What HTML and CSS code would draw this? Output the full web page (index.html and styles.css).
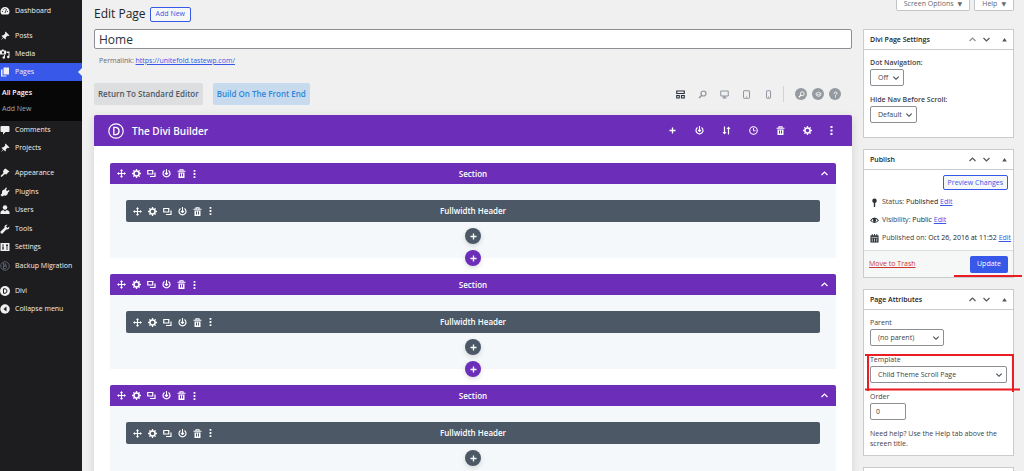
FILE: index.html
```html
<!DOCTYPE html>
<html lang="en">
<head>
<meta charset="utf-8">
<title>Edit Page</title>
<link rel="stylesheet" href="styles.css">
</head>
<body>
<svg class="sprite" aria-hidden="true">
  <symbol id="move" viewBox="0 0 18 18"><path d="M9 2v14M2 9h14" stroke="currentColor" stroke-width="2.4"/><path d="M9 0l3 4H6zM9 18l3-4H6zM0 9l4-3v6zM18 9l-4-3v6z" fill="currentColor"/></symbol>
  <symbol id="gear" viewBox="0 0 18 18"><circle cx="9" cy="9" r="5" fill="none" stroke="currentColor" stroke-width="3"/><path d="M9 0v4M9 14v4M0 9h4M14 9h4M2.8 2.8l2.6 2.6M12.6 12.6l2.6 2.6M15.2 2.8l-2.6 2.6M5.4 12.6l-2.6 2.6" stroke="currentColor" stroke-width="2.6"/></symbol>
  <symbol id="copy" viewBox="0 0 18 18"><path d="M1.500 3h10v7h-10zM6 15h10V7" fill="none" stroke="currentColor" stroke-width="2.4"/></symbol>
  <symbol id="power" viewBox="0 0 18 18"><path d="M5 3a7 7 0 1 0 8 0" fill="none" stroke="currentColor" stroke-width="2.3"/><path d="M9 0v10M6 8l3 3 3-3" fill="none" stroke="currentColor" stroke-width="2.2"/></symbol>
  <symbol id="trash" viewBox="0 0 18 18"><path d="M1 4.5h16M6 4V1.5h6V4" fill="none" stroke="currentColor" stroke-width="2.3"/><path d="M3 7h12v11H3zM6 9v6h2V9zM10 9v6h2V9z" fill="currentColor" fill-rule="evenodd"/></symbol>
  <symbol id="dots" viewBox="0 0 6 18"><path d="M1 0h4v4H1zM1 7h4v4H1zM1 14h4v4H1z" fill="currentColor"/></symbol>
  <symbol id="plus" viewBox="0 0 18 18"><path d="M9 3v12M3 9h12" stroke="currentColor" stroke-width="2.600"/></symbol>
  <symbol id="sort" viewBox="0 0 18 18"><path d="M5 1v14M13 17V3" stroke="currentColor" stroke-width="2.400"/><path d="M1 12h8l-4 5zM9 6h8l-4-5z" fill="currentColor"/></symbol>
  <symbol id="clock" viewBox="0 0 18 18"><circle cx="9" cy="9" r="7.500" fill="none" stroke="currentColor" stroke-width="2.200"/><path d="M9 4v5.500h4" fill="none" stroke="currentColor" stroke-width="2"/></symbol>
  <symbol id="up" viewBox="0 0 18 18"><path d="M3 12l6-6 6 6" fill="none" stroke="currentColor" stroke-width="2.400"/></symbol>
  <symbol id="down" viewBox="0 0 18 18"><path d="M3 6l6 6 6-6" fill="none" stroke="currentColor" stroke-width="2.400"/></symbol>
  <symbol id="search" viewBox="0 0 18 18"><circle cx="11" cy="7" r="5" fill="none" stroke="currentColor" stroke-width="2.400"/><path d="M7.500 10.500L2 16" stroke="currentColor" stroke-width="3"/></symbol>
  <symbol id="wire" viewBox="0 0 18 18"><path d="M1.500 2h15v5h-15zM1.500 11h5v5h-5zM11 11h5.500v5H11z" fill="none" stroke="currentColor" stroke-width="2.300"/></symbol>
  <symbol id="desktop" viewBox="0 0 18 18"><path d="M1.500 2h15v10h-15z" fill="none" stroke="currentColor" stroke-width="2"/><path d="M7 12h4v3h2v2H5v-2h2z" fill="currentColor"/></symbol>
  <symbol id="tablet" viewBox="0 0 18 18"><rect x="3" y="1.500" width="12" height="15" rx="1" fill="none" stroke="currentColor" stroke-width="2"/><path d="M8 14h2" stroke="currentColor" stroke-width="2"/></symbol>
  <symbol id="phone" viewBox="0 0 18 18"><rect x="5" y="1.500" width="8" height="15" rx="1" fill="none" stroke="currentColor" stroke-width="2"/><path d="M8 14h2" stroke="currentColor" stroke-width="2"/></symbol>
  <symbol id="layers" viewBox="0 0 18 18"><path d="M9 3l7 3.500L9 10 2 6.500zM2 10l7 4 7-4" fill="none" stroke="currentColor" stroke-width="2"/></symbol>
  <symbol id="help" viewBox="0 0 18 18"><path d="M5.500 7c0-6 7.500-5 7.500-1 0 2.500-4 2.500-4 6" fill="none" stroke="currentColor" stroke-width="2.400"/><path d="M7.700 13.800h2.600v2.600H7.700z" fill="currentColor"/></symbol>
  <symbol id="dash" viewBox="0 0 20 20"><path d="M3.500 17a9 9 0 1 1 13 0z" fill="currentColor"/><path d="M10 14l3-8M4 11h2M5.500 6l1.500 1.500M10 4v2M14 11h2" stroke="#1d1d1f" stroke-width="1.700"/></symbol>
  <symbol id="pin" viewBox="0 0 20 20"><path d="M11 1l8 8-2 1-2-.5-3.500 3.500c.5 2 0 3-1 4L7 13.500 1 19l5-6.500L3 9.500c1-1 2.500-1.500 4-1L10.500 5 10 3z" fill="currentColor"/></symbol>
  <symbol id="media" viewBox="0 0 20 20"><path d="M0 3h3l1-2h3l1 2h4v8H0z" fill="currentColor"/><circle cx="6" cy="7" r="2.300" fill="#1d1d1f"/><path d="M13 5h6v11a2.500 2.500 0 1 1-2-2.500V8h-4z" fill="currentColor"/><path d="M9 12v5" stroke="currentColor" stroke-width="2"/><circle cx="7.500" cy="17" r="2.500" fill="currentColor"/></symbol>
  <symbol id="pages" viewBox="0 0 20 20"><path d="M7 1h11v14H7z" fill="currentColor"/><path d="M5 5H2v14h11v-2H5z" fill="currentColor"/></symbol>
  <symbol id="comment" viewBox="0 0 20 20"><path d="M3 2h14q2 0 2 2v8q0 2-2 2h-6l-5 5v-5H3q-2 0-2-2V4q0-2 2-2z" fill="currentColor"/></symbol>
  <symbol id="brush" viewBox="0 0 20 20"><path d="M8 3l3-2 8 6-3 2-3 4-3-1-7 6-2-2 6-6-1-3z" fill="currentColor"/></symbol>
  <symbol id="plug" viewBox="0 0 20 20"><path d="M12 1l2 1-2 4 2 2 4-2 1 2-3 3c0 5-4 7-8 6l-4 2-3-3 3-3c-1-5 2-8 5-8z" fill="currentColor"/></symbol>
  <symbol id="user" viewBox="0 0 20 20"><circle cx="10" cy="5" r="4.500" fill="currentColor"/><path d="M1 18v-4q2-4 6-4l3 3 3-3q4 0 6 4v4z" fill="currentColor"/></symbol>
  <symbol id="wrench" viewBox="0 0 20 20"><path d="M18.500 5L15 8l-3-3 3-3.500c-4-1-7 2-6 6L1 15c-1 3 2 5 4 4l7.500-8c4 1 7-2 6-6z" fill="currentColor"/></symbol>
  <symbol id="sliders" viewBox="0 0 20 20"><path d="M1 2h18v16H1z" fill="currentColor"/><path d="M6 4v12M14 4v12M4 12h4M12 7h4" stroke="#1d1d1f" stroke-width="1.700"/></symbol>
  <symbol id="backup" viewBox="0 0 20 20"><circle cx="10" cy="10" r="8.500" fill="none" stroke="#56606c" stroke-width="2"/><path d="M7 4v12M7 6h4q3 2 0 4H7q7-1 6 3-1 3-6 3" fill="none" stroke="#56606c" stroke-width="2"/></symbol>
  <symbol id="divi" viewBox="0 0 20 20"><circle cx="10" cy="10" r="10" fill="currentColor"/><path d="M7 5.500h3q4 .5 4 4.500t-4 4.500H7z" fill="none" stroke="#1d1d1f" stroke-width="2"/></symbol>
  <symbol id="collapse" viewBox="0 0 20 20"><circle cx="10" cy="10" r="9.500" fill="currentColor"/><path d="M13 5v10l-6-5z" fill="#1d1d1f"/></symbol>
  <symbol id="ring" viewBox="0 0 20 20"><circle cx="10" cy="10" r="9" fill="none" stroke="currentColor" stroke-width="1.500"/><path d="M7.300 5.500H10q3.800.5 3.800 4.500T10 14.500H7.300z" fill="none" stroke="currentColor" stroke-width="1.700"/></symbol>
  <symbol id="post-pin" viewBox="0 0 20 20"><circle cx="10" cy="6" r="5" fill="currentColor"/><path d="M10 8v12" stroke="currentColor" stroke-width="3"/></symbol>
  <symbol id="eye" viewBox="0 0 20 20"><path d="M0 10q10-13 20 0-10 11-20 0z" fill="currentColor"/><path d="M3 10q2-3 4-3.500-1 4 1 6.500-3-.5-5-3zM17 10q-2-3-4-3.500 1 4-1 6.500 3-.5 5-3z" fill="#fff"/></symbol>
  <symbol id="calendar" viewBox="0 0 20 20"><path d="M1 3h18v16H1z" fill="currentColor"/><path d="M3 7.500h14M5 10v7M10 10v7M15 10v7" stroke="#fff" stroke-width="1.500"/><path d="M5 0v5M10 0v5M15 0v5" stroke="currentColor" stroke-width="2"/></symbol>
  <symbol id="tri" viewBox="0 0 18 18"><path d="M3 14L9 5l6 9z" fill="currentColor"/></symbol>
</svg>

<div class="app">
  <nav class="sidebar">
    <ul class="menu">
      <li><a href="#"><svg><use href="#dash"/></svg>Dashboard</a></li>
    </ul>
    <ul class="menu">
      <li><a href="#"><svg><use href="#pin"/></svg>Posts</a></li>
      <li><a href="#"><svg><use href="#media"/></svg>Media</a></li>
      <li class="current"><a href="#"><svg><use href="#pages"/></svg>Pages</a></li>
    </ul>
    <ul class="submenu">
      <li><a class="active" href="#">All Pages</a></li>
      <li><a href="#">Add New</a></li>
    </ul>
    <ul class="menu">
      <li><a href="#"><svg><use href="#comment"/></svg>Comments</a></li>
      <li><a href="#"><svg><use href="#pin"/></svg>Projects</a></li>
    </ul>
    <ul class="menu tools">
      <li><a href="#"><svg><use href="#brush"/></svg>Appearance</a></li>
      <li><a href="#"><svg><use href="#plug"/></svg>Plugins</a></li>
      <li><a href="#"><svg><use href="#user"/></svg>Users</a></li>
      <li><a href="#"><svg><use href="#wrench"/></svg>Tools</a></li>
      <li><a href="#"><svg><use href="#sliders"/></svg>Settings</a></li>
      <li><a href="#"><svg><use href="#backup"/></svg>Backup Migration</a></li>
    </ul>
    <ul class="menu">
      <li><a href="#"><svg><use href="#divi"/></svg>Divi</a></li>
      <li><a href="#"><svg><use href="#collapse"/></svg>Collapse menu</a></li>
    </ul>
  </nav>

  <main class="editor">
    <header class="title-row"><h1>Edit Page</h1><a class="outline-btn" href="#">Add New</a></header>
    <input class="title-input" type="text" value="Home" aria-label="Page title">
    <p class="permalink"><b>Permalink:</b> <a href="#">https://unitefold.tastewp.com/</a></p>
    <div class="toolbar">
      <button class="mode">Return To Standard Editor</button>
      <button class="mode front">Build On The Front End</button>
      <div class="views">
        <button class="on" aria-label="Wireframe"><svg><use href="#wire"/></svg></button>
        <button aria-label="Zoom"><svg><use href="#search"/></svg></button>
        <button aria-label="Desktop"><svg><use href="#desktop"/></svg></button>
        <button aria-label="Tablet"><svg><use href="#tablet"/></svg></button>
        <button aria-label="Phone"><svg><use href="#phone"/></svg></button>
      </div>
      <div class="rounds">
        <button aria-label="Search"><svg><use href="#search"/></svg></button>
        <button aria-label="Layers"><svg><use href="#layers"/></svg></button>
        <button aria-label="Help"><svg><use href="#help"/></svg></button>
      </div>
    </div>

    <div class="builder">
      <header class="builder-head">
        <svg class="logo"><use href="#ring"/></svg>
        <h2>The Divi Builder</h2>
        <div class="builder-tools">
          <button aria-label="Add"><svg><use href="#plus"/></svg></button>
          <button aria-label="Save"><svg><use href="#power"/></svg></button>
          <button aria-label="Sort"><svg><use href="#sort"/></svg></button>
          <button aria-label="History"><svg><use href="#clock"/></svg></button>
          <button aria-label="Delete"><svg><use href="#trash"/></svg></button>
          <button aria-label="Settings"><svg><use href="#gear"/></svg></button>
          <button aria-label="More"><svg><use href="#dots"/></svg></button>
        </div>
      </header>
      <div class="sections">
        <section class="section">
          <header class="bar">
            <div class="icons"><button aria-label="Move"><svg><use href="#move"/></svg></button><button aria-label="Settings"><svg><use href="#gear"/></svg></button><button aria-label="Duplicate"><svg><use href="#copy"/></svg></button><button aria-label="Save"><svg><use href="#power"/></svg></button><button aria-label="Delete"><svg><use href="#trash"/></svg></button><button class="more" aria-label="More"><svg><use href="#dots"/></svg></button></div>
            <span>Section</span><button class="fold" aria-label="Collapse"><svg><use href="#up"/></svg></button>
          </header>
          <div class="section-body">
            <div class="bar module">
              <div class="icons"><button aria-label="Move"><svg><use href="#move"/></svg></button><button aria-label="Settings"><svg><use href="#gear"/></svg></button><button aria-label="Duplicate"><svg><use href="#copy"/></svg></button><button aria-label="Save"><svg><use href="#power"/></svg></button><button aria-label="Delete"><svg><use href="#trash"/></svg></button><button class="more" aria-label="More"><svg><use href="#dots"/></svg></button></div>
              <span>Fullwidth Header</span>
            </div>
            <button class="add" aria-label="Add module"><svg><use href="#plus"/></svg></button>
            <button class="add violet" aria-label="Add section"><svg><use href="#plus"/></svg></button>
          </div>
        </section>
        <section class="section">
          <header class="bar">
            <div class="icons"><button aria-label="Move"><svg><use href="#move"/></svg></button><button aria-label="Settings"><svg><use href="#gear"/></svg></button><button aria-label="Duplicate"><svg><use href="#copy"/></svg></button><button aria-label="Save"><svg><use href="#power"/></svg></button><button aria-label="Delete"><svg><use href="#trash"/></svg></button><button class="more" aria-label="More"><svg><use href="#dots"/></svg></button></div>
            <span>Section</span><button class="fold" aria-label="Collapse"><svg><use href="#up"/></svg></button>
          </header>
          <div class="section-body">
            <div class="bar module">
              <div class="icons"><button aria-label="Move"><svg><use href="#move"/></svg></button><button aria-label="Settings"><svg><use href="#gear"/></svg></button><button aria-label="Duplicate"><svg><use href="#copy"/></svg></button><button aria-label="Save"><svg><use href="#power"/></svg></button><button aria-label="Delete"><svg><use href="#trash"/></svg></button><button class="more" aria-label="More"><svg><use href="#dots"/></svg></button></div>
              <span>Fullwidth Header</span>
            </div>
            <button class="add" aria-label="Add module"><svg><use href="#plus"/></svg></button>
            <button class="add violet" aria-label="Add section"><svg><use href="#plus"/></svg></button>
          </div>
        </section>
        <section class="section">
          <header class="bar">
            <div class="icons"><button aria-label="Move"><svg><use href="#move"/></svg></button><button aria-label="Settings"><svg><use href="#gear"/></svg></button><button aria-label="Duplicate"><svg><use href="#copy"/></svg></button><button aria-label="Save"><svg><use href="#power"/></svg></button><button aria-label="Delete"><svg><use href="#trash"/></svg></button><button class="more" aria-label="More"><svg><use href="#dots"/></svg></button></div>
            <span>Section</span><button class="fold" aria-label="Collapse"><svg><use href="#up"/></svg></button>
          </header>
          <div class="section-body">
            <div class="bar module">
              <div class="icons"><button aria-label="Move"><svg><use href="#move"/></svg></button><button aria-label="Settings"><svg><use href="#gear"/></svg></button><button aria-label="Duplicate"><svg><use href="#copy"/></svg></button><button aria-label="Save"><svg><use href="#power"/></svg></button><button aria-label="Delete"><svg><use href="#trash"/></svg></button><button class="more" aria-label="More"><svg><use href="#dots"/></svg></button></div>
              <span>Fullwidth Header</span>
            </div>
            <button class="add" aria-label="Add module"><svg><use href="#plus"/></svg></button>
          </div>
        </section>
      </div>
    </div>
  </main>

  <aside class="side">
    <div class="tabs"><button>Screen Options <i>▼</i></button><button>Help <i>▼</i></button></div>

    <section class="box settings">
      <header class="box-head"><h2>Divi Page Settings</h2><svg class="dim"><use href="#up"/></svg><svg><use href="#down"/></svg><svg class="small"><use href="#tri"/></svg></header>
      <div class="box-body">
        <label for="dot"><b>Dot Navigation:</b></label>
        <div class="select"><select id="dot"><option>Off</option></select><svg><use href="#down"/></svg></div>
        <label for="hide"><b>Hide Nav Before Scroll:</b></label>
        <div class="select"><select id="hide"><option>Default</option></select><svg><use href="#down"/></svg></div>
      </div>
    </section>

    <section class="box">
      <header class="box-head"><h2>Publish</h2><svg><use href="#up"/></svg><svg><use href="#down"/></svg><svg class="small"><use href="#tri"/></svg></header>
      <div class="publish">
        <button class="outline-btn preview">Preview Changes</button>
        <p><svg><use href="#post-pin"/></svg><span>Status: <b>Published</b> <a href="#">Edit</a></span></p>
        <p><svg><use href="#eye"/></svg><span>Visibility: <b>Public</b> <a href="#">Edit</a></span></p>
        <p><svg><use href="#calendar"/></svg><span>Published on: <b>Oct 26, 2016 at 11:52</b> <a href="#">Edit</a></span></p>
      </div>
      <footer class="actions"><a class="danger" href="#">Move to Trash</a><div class="marked"><button class="primary">Update</button><span class="underline"></span></div></footer>
    </section>

    <section class="box">
      <header class="box-head"><h2>Page Attributes</h2><svg><use href="#up"/></svg><svg><use href="#down"/></svg><svg class="small"><use href="#tri"/></svg></header>
      <div class="box-body">
        <label for="parent">Parent</label>
        <div class="select parent"><select id="parent"><option>(no parent)</option></select><svg><use href="#down"/></svg></div>
        <div class="marked">
          <label for="template">Template</label>
          <div class="select wide"><select id="template"><option>Child Theme Scroll Page</option></select><svg><use href="#down"/></svg></div>
          <svg class="frame" viewBox="0 0 154 38" preserveAspectRatio="none"><path d="M0 1h148M3 0v37M147 0v38M0 35.500h154" fill="none" stroke="#ea1c24" stroke-width="2"/></svg>
        </div>
        <label for="order">Order</label>
        <input id="order" class="order" type="text" value="0">
        <p class="hint">Need help? Use the Help tab above the screen title.</p>
      </div>
    </section>
    <section class="box"><header class="box-head"></header></section>
  </aside>
</div>
</body>
</html>
```
FILE: styles.css
```css
* { box-sizing: border-box; }
body { margin: 0; background: #f0f0f0; color: #3c434a; font: 7px/10px "Open Sans", "Noto Sans", sans-serif; }
h1, h2, p, ul { margin: 0; padding: 0; }
ul { list-style: none; }
button, input, select { font: inherit; color: inherit; }
button { display: inline-flex; align-items: center; justify-content: center; padding: 0; border: 0; background: none; }
svg { display: block; flex: none; width: 9px; height: 9px; }
a { color: #3858e9; }
b { font-weight: 600; }
.sprite { position: absolute; width: 0; height: 0; }
.app { display: grid; grid-template-columns: 82px minmax(0, 1fr) 151px; column-gap: 11px; height: 100vh; padding-right: 10px; overflow: hidden; }

.sidebar { display: flex; flex-direction: column; padding-top: 2px; background: #1d1d1f; }
.sidebar a { color: #f0f0f1; text-decoration: none; white-space: nowrap; }
.menu { margin-bottom: 7px; }
.menu a { display: flex; align-items: center; gap: 5px; height: 18px; }
.menu svg { width: 10px; height: 10px; }
.menu:has(.current) { margin-bottom: 0; }
.current { display: grid; grid-template-columns: 1fr auto; align-items: center; background: #3858e9; }
.current::after { content: ""; border: 4px solid transparent; border-left-width: 0; border-right-color: #f0f0f0; }
.submenu { padding: 4px 2px; background: #070707; }
.submenu a { display: block; line-height: 16px; color: #a5a8ab; }
.submenu .active { color: #fff; font-weight: 600; }
.tools { display: grid; grid-auto-rows: 1fr; height: 111px; }

.editor { display: flex; flex-direction: column; padding: 6px 0 0 1px; }
.title-row { display: flex; align-items: center; gap: 4px; height: 16px; margin-bottom: 7px; }
h1 { font-size: 12px; font-weight: 400; color: #1d2327; }
.outline-btn { display: flex; align-items: center; height: 15px; padding: 0 5px; border: 1px solid #3858e9; border-radius: 2px; background: #f6f7f7; color: #3858e9; text-decoration: none; }
.title-input { width: 100%; height: 20px; padding: 0 4px; border: 1px solid #8c8f94; border-radius: 2px; background: #fff; font-size: 12px; color: #2c3338; }
.permalink { margin: 7px 5px 17px; color: #646970; }
.permalink b { font-weight: 500; }
.toolbar { display: flex; align-items: center; height: 22px; margin-bottom: 10px; }
.mode { height: 22px; padding: 0 4px; margin-right: 10px; border-radius: 2px; background: #dcdee0; color: #4c5866; font-size: 8px; font-weight: 600; }
.front { background: #c8daee; color: #2b87da; }
.views { display: flex; gap: 13px; margin-left: auto; padding-right: 10px; color: #8e959f; }
.views .on { color: #2c3440; }
.rounds { display: flex; gap: 5px; height: 16px; align-items: center; padding: 0 11px; border-left: 1px solid #d0d2d5; }
.rounds button { width: 12px; height: 12px; border-radius: 50%; background: #959aa1; color: #fff; }
.rounds svg { width: 7px; height: 7px; }
.builder { flex: 1; background: #fff; border-radius: 2px 2px 0 0; box-shadow: 0 2px 10px rgba(0, 0, 0, .12); }
.builder-head { display: flex; align-items: center; height: 31px; padding: 0 19px 0 14px; border-radius: 2px 2px 0 0; background: #6c2eb9; color: #fff; }
.logo { width: 16px; height: 16px; }
.builder-head h2 { margin-left: 8px; font-size: 10px; font-weight: 600; }
.builder-tools { display: flex; gap: 18px; margin-left: auto; }
.builder-tools button:last-child svg { width: 3px; }
.sections { display: grid; gap: 16px; padding: 17px 16px; }
.bar { display: grid; flex: none; grid-template-columns: 1fr auto 1fr; align-items: center; height: 21px; padding: 0 7px; border-radius: 2px; background: #6c2eb9; color: #fff; font-size: 8px; font-weight: 600; }
.section > .bar { border-radius: 2px 2px 0 0; }
.icons { display: flex; gap: 6px; }
.more svg { width: 5px; height: 8px; }
.fold { justify-self: end; }
.section-body { display: flex; flex-direction: column; align-items: center; gap: 6px; height: 74px; padding: 16px 16px 0; background: #f4f8fb; }
.module { width: 100%; height: 22px; background: #4c5866; }
.add { flex: none; width: 16px; height: 16px; border-radius: 50%; background: #4c5866; color: #fff; box-shadow: 0 2px 5px rgba(0, 0, 0, .14); }
.violet { background: #6c2eb9; }

.side { min-width: 0; }
.tabs { display: flex; justify-content: flex-end; gap: 4px; margin-bottom: 18px; }
.tabs button { height: 11px; padding: 0 7px 2px; border: 1px solid #c3c4c7; border-top: 0; border-radius: 0 0 2px 2px; background: #fff; color: #646970; line-height: 8px; }
.tabs i { margin-left: 4px; font: 6px/6px "DejaVu Sans", sans-serif; }
.box { margin-bottom: 11px; border: 1px solid #c9cbce; background: #fff; }
.box-head { display: flex; align-items: center; gap: 5px; height: 20px; padding: 0 5px 0 6px; border-bottom: 1px solid #c9cbce; color: #50575e; }
.box-head h2 { margin-right: auto; font-size: 7px; font-weight: 600; color: #1d2327; }
.box-head .dim { color: #8c8f94; }
.box-head .small { width: 7px; height: 7px; margin-left: 5px; }
.box-body { padding: 7px 6px 6px; }
.box-body label { display: block; height: 12px; line-height: 12px; }
.select { display: grid; width: fit-content; margin-bottom: 8px; align-items: center; justify-items: end; }
.select > * { grid-area: 1 / 1; }
.select svg { width: 8px; height: 8px; margin-right: 4px; pointer-events: none; }
select { appearance: none; width: 100%; height: 17px; padding: 0 14px 0 7px; border: 1px solid #8c8f94; border-radius: 2px; background: #fff; }
.parent select { padding-right: 28px; }
.wide { width: 100%; }
.publish { padding: 5px 5px 3px 6px; }
.preview { margin: 0 0 3px auto; padding: 0 4px; }
.publish p { display: flex; align-items: center; gap: 3px; height: 18px; white-space: nowrap; }
.publish b { font-weight: 500; color: #1d2327; }
.publish svg { color: #2c3338; }
.actions { display: flex; align-items: center; justify-content: space-between; height: 27px; padding: 0 5px; border-top: 1px solid #dcdcde; background: #f6f7f7; }
.danger { color: #c9382f; }
.primary { height: 17px; padding: 0 7px; border-radius: 2px; background: #3858e9; color: #fff; }
.marked { position: relative; }
.underline { position: absolute; top: 19px; left: -16px; width: 68px; height: 2px; background: #ea1c24; }
.frame { position: absolute; top: 0; left: -5px; width: calc(100% + 18px); height: 38px; overflow: visible; }
.order { display: block; width: 36px; height: 17px; padding: 0 5px; border: 1px solid #8c8f94; border-radius: 2px; background: #fff; }
.hint { margin-top: 9px; }
```
